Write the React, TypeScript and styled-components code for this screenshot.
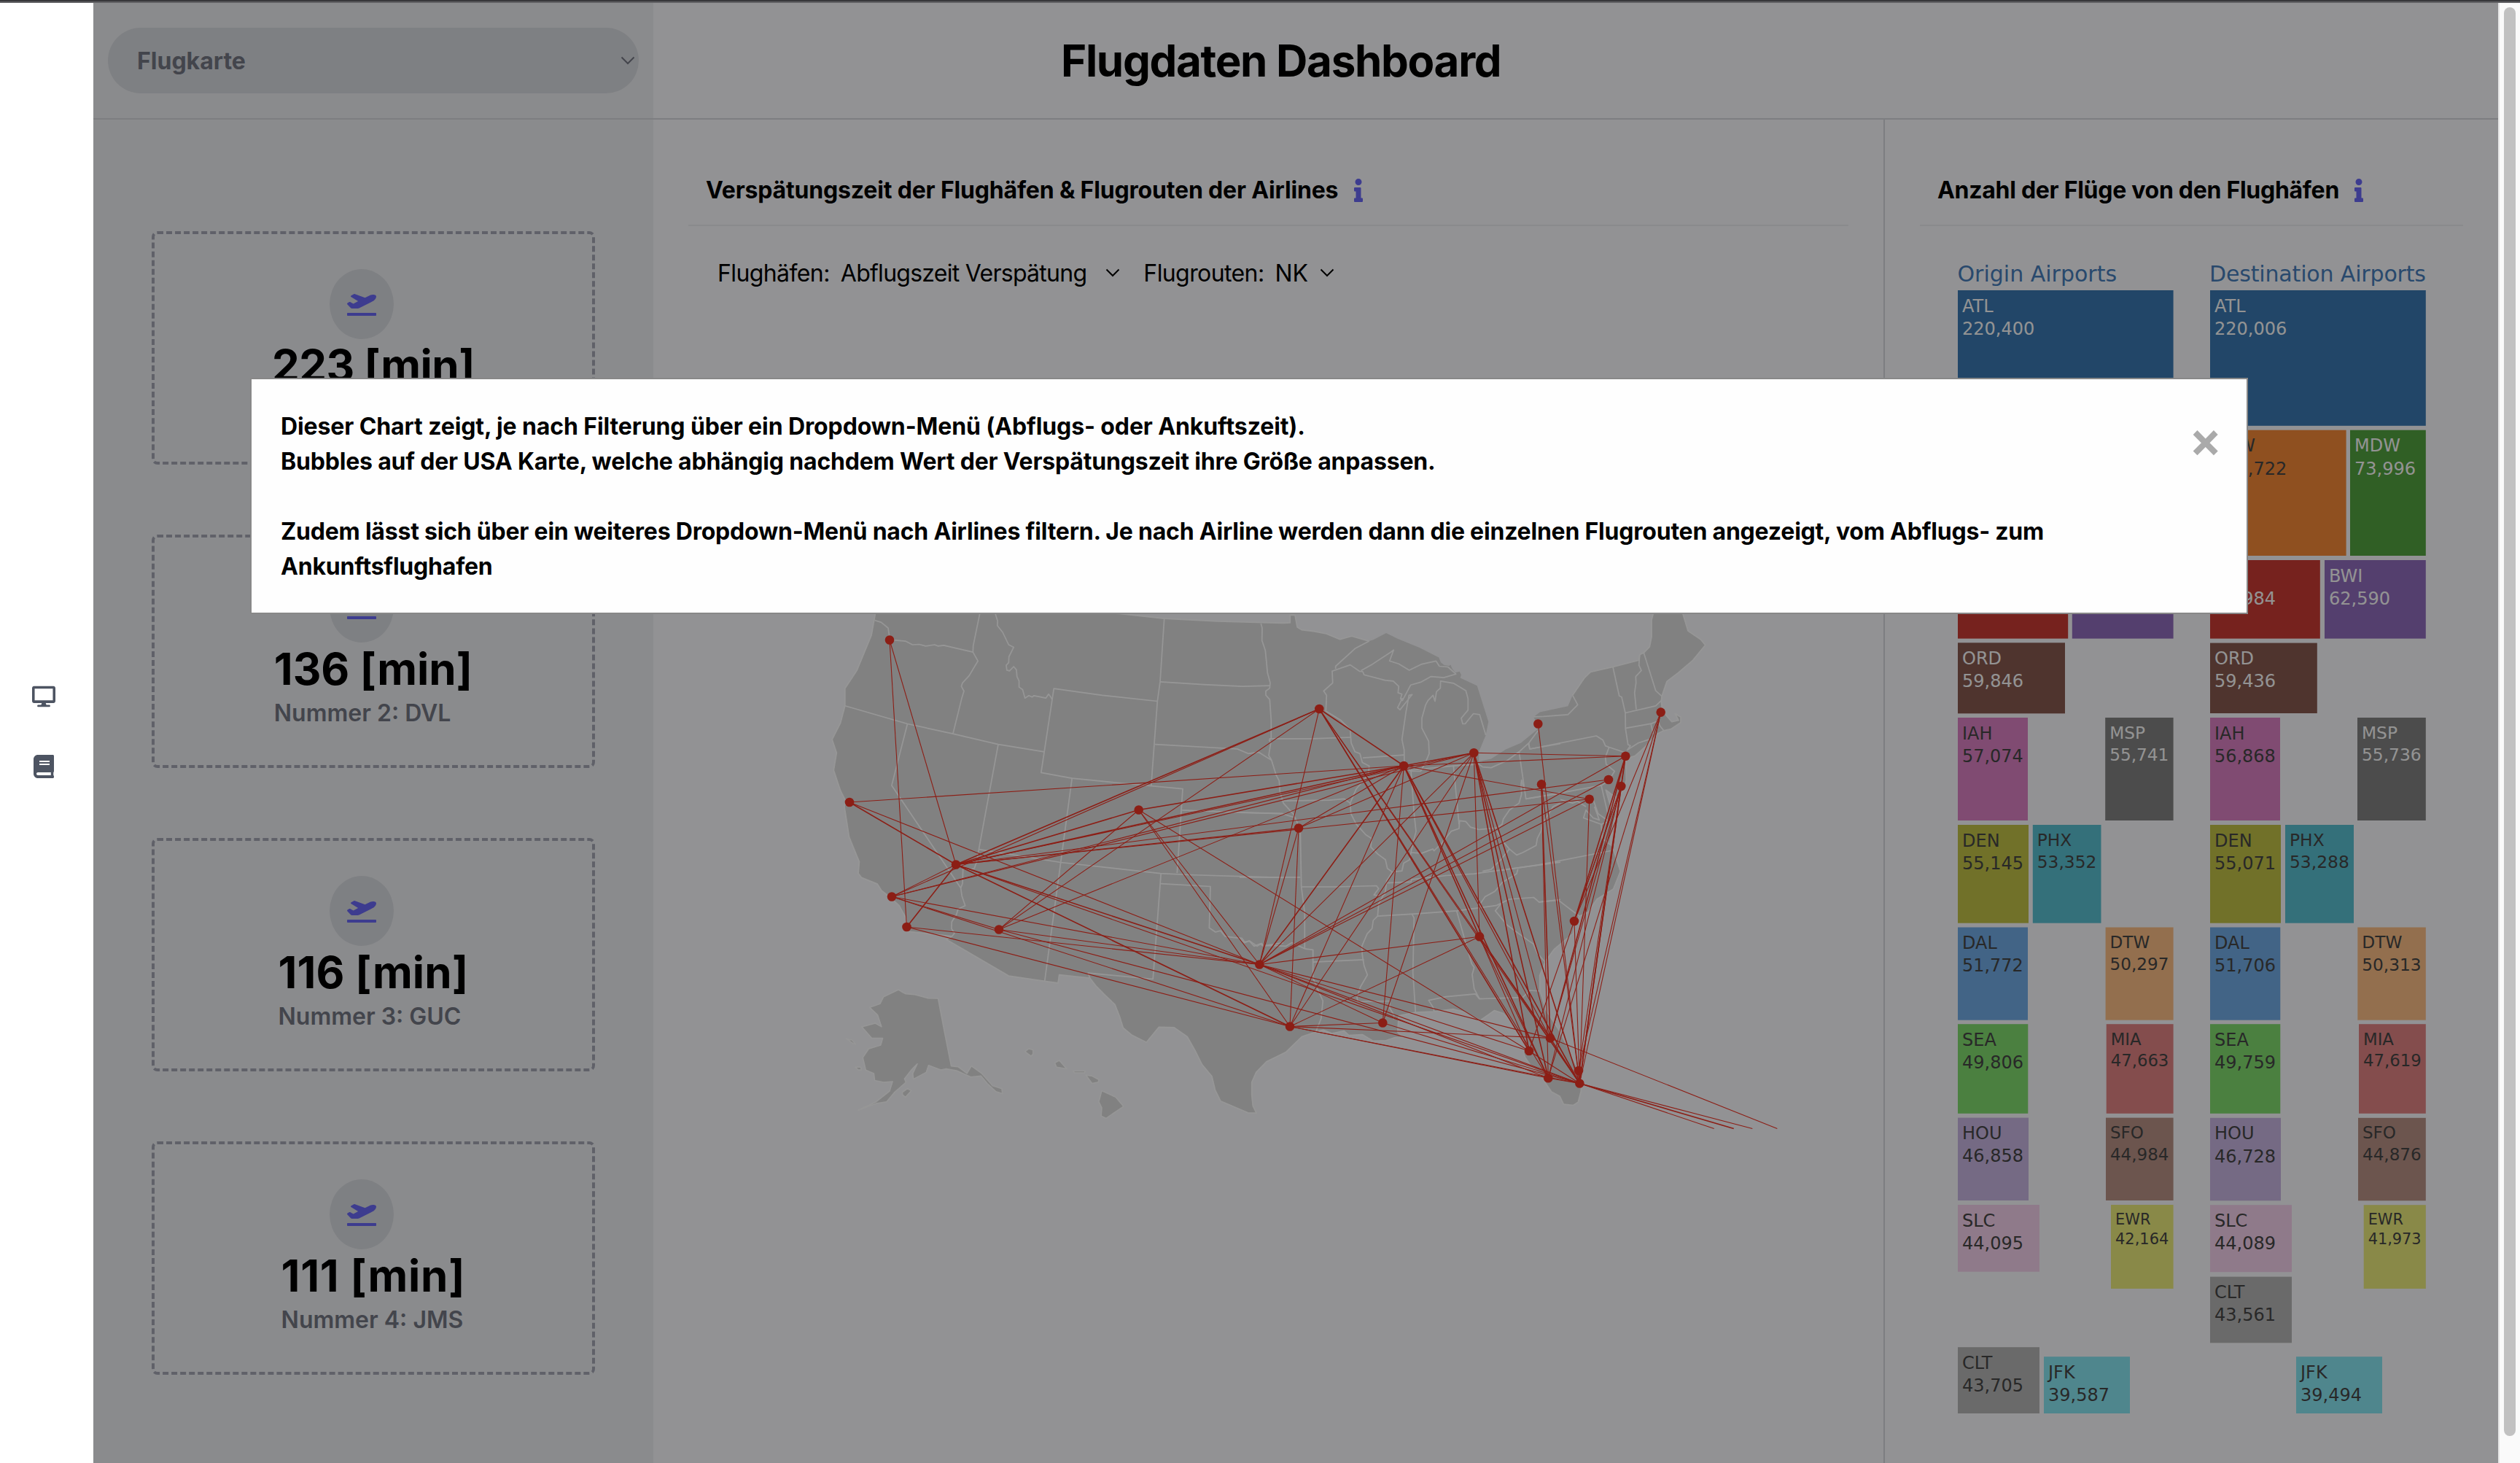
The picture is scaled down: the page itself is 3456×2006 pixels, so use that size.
import React from "react";
import styled, { createGlobalStyle } from "styled-components";
import { FaBook, FaDesktop, FaInfo, FaPlaneDeparture } from "react-icons/fa";

const GlobalStyle = createGlobalStyle`
  *, *::before, *::after { box-sizing: border-box; }
  html, body { margin: 0; padding: 0; background: #fff; }
  body { font-family: Inter, "Liberation Sans", sans-serif; color: #000; overflow: hidden; }
`;

/* ---------- page frame ---------- */

const Page = styled.div`
  display: flex;
  flex-direction: column;
  width: 3456px;
  height: 2006px;
  overflow: hidden;
`;

const WindowEdge = styled.div`
  flex: none;
  height: 4px;
  background: #37373a;
  border-bottom: 2px solid #616164;
`;

const Frame = styled.div`
  flex: 1;
  display: flex;
  min-height: 0;
`;

const Sidebar = styled.nav`
  flex: none;
  width: 128px;
  padding: 0 8px 4px 0;
  display: flex;
  flex-direction: column;
  align-items: center;
  justify-content: center;
  gap: 64px;
  background: #fff;
  color: #4d5462;

  svg {
    display: block;
    width: auto;
    height: 32px;
  }
`;

const Main = styled.main`
  position: relative;
  flex: 1;
  min-width: 0;
  display: flex;
  flex-direction: column;
  background: #f4f4f7;
`;

const ScrollTrack = styled.div`
  flex: none;
  width: 30px;
  padding: 6px 6px 37px;
  display: flex;
  background: #fafafa;
  border-left: 2px solid #e6e6e6;
`;

const ScrollThumb = styled.div`
  width: 16px;
  border-radius: 8px;
  background: #c1c1c1;
`;

/* ---------- header ---------- */

const Header = styled.header`
  flex: none;
  height: 160px;
  display: flex;
  align-items: stretch;
  border-bottom: 2px solid #d1d2d7;
`;

const HeaderSide = styled.div`
  width: 768px;
  padding: 0 20px;
  display: flex;
  align-items: center;
  background: #e6e8eb;
`;

const ViewSelect = styled.div`
  flex: 1;
  height: 90px;
  padding: 0 5px 0 40px;
  display: flex;
  align-items: center;
  justify-content: space-between;
  border-radius: 45px;
  background: #d3d5da;
  color: #71737f;
  font-size: 32px;
  font-weight: 700;
`;

const Title = styled.h1`
  margin: 0;
  padding-left: 559px;
  align-self: center;
  font-size: 60px;
  line-height: 72px;
  font-weight: 700;
  letter-spacing: -1.3px;
  white-space: nowrap;
`;

/* ---------- content columns ---------- */

const Content = styled.div`
  flex: 1;
  min-height: 0;
  display: flex;
`;

const StatsColumn = styled.aside`
  flex: none;
  width: 768px;
  padding: 153px 80px 0;
  display: flex;
  flex-direction: column;
  gap: 96px;
  background: #e6e8eb;
`;

const StatCard = styled.section`
  flex: none;
  height: 320px;
  padding-top: 48px;
  display: flex;
  justify-content: center;
  border: 4px dashed #a0a2b0;
  border-radius: 8px;
`;

const StatBody = styled.div`
  display: flex;
  flex-direction: column;
`;

const IconBadge = styled.div`
  align-self: center;
  width: 88px;
  height: 96px;
  margin-right: 32px;
  display: flex;
  align-items: center;
  justify-content: center;
  border-radius: 50%;
  background: #d3d5da;
  color: #6765ee;

  svg { width: 40px; height: 32px; }
`;

const StatValue = styled.div<{ $tracking: number }>`
  font-size: 60px;
  line-height: 73px;
  font-weight: 700;
  letter-spacing: ${(p) => p.$tracking}px;
  white-space: nowrap;
`;

const StatLabel = styled.div`
  font-size: 32px;
  line-height: 48px;
  font-weight: 600;
  color: #71737f;
  white-space: nowrap;
`;

const Panel = styled.section<{ $width?: number }>`
  flex: ${(p) => (p.$width ? "none" : 1)};
  width: ${(p) => (p.$width ? `${p.$width}px` : "auto")};
  padding: 48px 48px 0;
  min-width: 0;
  display: flex;
  flex-direction: column;

  & + & { border-left: 2px solid #d1d2d7; }
`;

const PanelHeading = styled.h2<{ $tracking: number; $gap: number }>`
  flex: none;
  margin: 0;
  height: 98px;
  padding: 1px 0 0 24px;
  display: flex;
  align-items: center;
  gap: ${(p) => p.$gap}px;
  border-bottom: 2px solid #e5e6ea;
  font-size: 32px;
  line-height: 48px;
  font-weight: 700;
  letter-spacing: ${(p) => p.$tracking}px;
  white-space: nowrap;

  svg { width: 12px; height: 32px; color: #6765ee; }
`;

const Filters = styled.div`
  flex: none;
  height: 48px;
  margin-top: 40px;
  padding-left: 40px;
  display: flex;
  align-items: center;
  gap: 32px;
  font-size: 32px;
  white-space: nowrap;
`;

const Filter = styled.label`
  display: flex;
  align-items: center;
  gap: 15px;
  letter-spacing: -0.6px;
`;

const FilterValue = styled.span<{ $gap: number; $tracking: number }>`
  display: flex;
  align-items: center;
  gap: ${(p) => p.$gap}px;
  letter-spacing: ${(p) => p.$tracking}px;
`;

const MapCanvas = styled.svg`
  flex: none;
  display: block;
  width: 1592px;
  height: 1200px;
`;

const TreemapCanvas = styled.svg`
  flex: none;
  display: block;
  width: 745px;
  height: 1690px;
  font-family: "DejaVu Sans", Verdana, sans-serif;
`;

/* ---------- modal ---------- */

const Overlay = styled.div`
  position: absolute;
  inset: 0;
  padding: 514px 0 0 215px;
  background: rgba(0, 0, 0, 0.4);
`;

const Modal = styled.div`
  width: 2740px;
  height: 324px;
  padding: 41px 34px 39px 40px;
  display: flex;
  justify-content: space-between;
  align-items: flex-start;
  border: 2px solid #888;
  background: #fefefe;
`;

const ModalText = styled.div`
  font-size: 32px;
  line-height: 48px;
  font-weight: 700;
  white-space: nowrap;
`;

const ModalLine = styled.p<{ $tracking: number; $spaced?: boolean }>`
  margin: 0 0 ${(p) => (p.$spaced ? 48 : 0)}px;
  letter-spacing: ${(p) => p.$tracking}px;
`;

const CloseButton = styled.button`
  margin: 0;
  padding: 0;
  border: 0;
  background: none;
  color: #aaa;
  -webkit-text-stroke: 2px #aaa;
  font-family: "DejaVu Sans", sans-serif;
  font-size: 53px;
  line-height: 90px;
  font-weight: 700;
`;

/* ---------- small drawings ---------- */

const Chevron = () => (
  <svg width="20" height="12" viewBox="0 0 20 12" fill="none" stroke="currentColor" strokeWidth="2">
    <path d="M1.5 1.5 10 10 18.5 1.5" />
  </svg>
);

/* ---------- statistics ---------- */

const stats = [
  { value: "223 [min]", tracking: -0.57 },
  { value: "136 [min]", tracking: 0, label: "Nummer 2: DVL" },
  { value: "116 [min]", tracking: 0.15, label: "Nummer 3: GUC" },
  { value: "111 [min]", tracking: 0.7, label: "Nummer 4: JMS" },
];

/* ---------- map ---------- */

type Pt = [number, number];

/* The map is digitised in three tiles, each with its own origin and scale. */
const tile = (ox: number, sx: number) => (s: string): Pt[] =>
  s
    .trim()
    .split(/\s+/)
    .map((pair) => {
      const [x, y] = pair.split(",").map(Number);
      return [ox + x / sx, 820 + y / 2.0632] as Pt;
    });
const west = tile(1120, 2.45);
const mid = tile(1700, 3);
const east = tile(2060, 3);

const toPath = (pts: Pt[], close = false) =>
  "M" + pts.map(([x, y]) => `${x.toFixed(1)} ${y.toFixed(1)}`).join("L") + (close ? "Z" : "");

const northWest = [
  ...west("197,20 1018,44 1168,58 1350,66 1568,71"),
  ...mid("208,70 208,48 228,48 237,82 255,90 305,94 357,101 413,117 461,108 533,122"),
];
const lakes = [
  ...mid(
    "550,118 603,99 650,115 740,140 820,168 828,182 842,190 862,192 868,189 875,200 888,211 905,208 912,217 908,226 977,248 1024,350 1013,388 985,434 985,462 1035,455 1095,428 1157,410 1225,372"
  ),
  ...east("148,365 130,336 155,323 271,306 290,275"),
];
const atlantic = east(
  "290,275 340,225 364,209 456,195 563,176 566,160 583,155 607,138 615,110 615,62 622,44 622,20 742,20 742,40 765,93 817,117 836,133 785,176 725,211 678,236 657,278 655,292 658,310 675,332 698,350 726,346 712,327 735,337 735,352 697,370 665,375 640,384 590,420 548,446 522,452 509,460 511,515 498,545 476,565 450,555 427,543 440,575 452,600 470,607 458,640 444,690 458,712 487,773 458,823 390,852 355,888 318,900 297,928 291,950 215,993 178,1028 155,1068 155,1110 180,1165 238,1226 290,1300 320,1345 327,1370 325,1395 313,1426 293,1435 253,1432 237,1409 203,1397 155,1348 115,1320 95,1300"
);
const gulf = [
  ...mid(
    "1175,1300 1168,1286 1180,1262 1145,1235 1120,1200 1085,1175 1048,1167 990,1195 930,1172 880,1163 800,1170 724,1172 655,1182 650,1228 672,1243 640,1243 602,1252 548,1253 505,1235 450,1237 430,1225 380,1232 345,1222 315,1227 256,1241 190,1285 112,1311 68,1342 50,1370 50,1405 55,1437 69,1457 35,1457"
  ),
  ...west(
    "1452,1457 1357,1423 1339,1392 1328,1353 1295,1320 1270,1278 1245,1241 1201,1215 1150,1214 1108,1257 1060,1237 1030,1216 1018,1184 1002,1150 970,1124 940,1099 918,1075 815,1066 811,1089 766,1084 645,1069 436,966 455,957 305,943 300,905 277,870 240,842 218,828 204,809 151,791 140,779 143,746 109,676 93,590 98,575 80,545 57,487 67,438 52,400 80,353 95,305 95,256 135,205 184,105 197,44 197,20"
  ),
];
const mainland = [...northWest, ...lakes, ...atlantic, ...gulf];

const islands = [
  west(
    "275,1108 290,1116 300,1120 330,1122 375,1132 408,1133 430,1230 452,1324 475,1326 505,1345 520,1324 555,1345 592,1380 622,1388 624,1402 602,1396 575,1375 552,1352 518,1355 470,1337 435,1332 418,1335 376,1322 368,1342 325,1361 323,1345 338,1318 318,1335 295,1360 300,1370 262,1398 235,1425 200,1430 140,1449 200,1425 245,1395 255,1368 225,1370 195,1365 192,1345 165,1335 155,1300 175,1275 215,1265 222,1245 185,1245 152,1213 197,1203 218,1213 205,1180 178,1158 213,1148 225,1128 258,1115"
  ),
  west("288,1398 305,1388 318,1394 298,1412 288,1405"),
  west("130,1327 148,1327 150,1335 140,1335"),
  west("100,1247 118,1250 131,1262 122,1260"),
  west("700,1283 713,1275 727,1278 727,1290 720,1296"),
  west("800,1315 815,1308 840,1332 806,1327"),
  west("862,1338 902,1338 900,1343 866,1343"),
  west("905,1350 925,1352 949,1363 945,1370 925,1373"),
  west("958,1394 1005,1412 1031,1438 972,1472 956,1465 958,1442 948,1425"),
];

const borders = [
  west("195,63 217,69 240,85 246,118 298,122 322,132 345,131 366,136 396,132 408,136 427,134 525,153"),
  west("548,44 526,135 525,153 542,178 512,220 490,240 486,250 495,263 487,285 458,384"),
  west("95,305 305,356 458,384 610,414 765,435"),
  west(
    "600,44 608,65 607,78 625,97 645,132 662,139 646,166 645,183 637,190 639,204 648,206 662,194 671,203 673,222 680,235 680,252 692,259 700,283 713,276 724,280 730,276 770,283 779,272 786,279 791,287"
  ),
  west("1145,292 960,275 797,256 754,494 858,510 1003,522 1230,540 1211,778"),
  west("1168,58 1154,237 1145,292 1124,530"),
  west("1154,237 1300,245 1430,250 1523,248"),
  west("1137,414 1414,427 1450,440 1485,436 1515,452 1527,458"),
  west("858,510 820,748 766,1084"),
  west("1228,600 1400,606 1568,610"),
  west("305,356 252,530 484,820 490,808 492,758 510,770 530,765 538,745 545,711 610,414"),
  west("545,711 820,748 1155,779 1250,783 1568,791"),
  west("484,820 488,843 499,870 475,880 470,895 454,916 453,935 463,948 455,957"),
  west("1157,779 1130,1078 912,1061 918,1075"),
  west(
    "1155,808 1323,816 1319,933 1340,945 1357,941 1372,957 1400,960 1428,962 1438,973 1455,970 1480,985 1495,977 1502,984 1568,975"
  ),
  mid(
    "88,72 93,85 92,120 106,148 115,212 126,240 124,255 108,263 108,275 124,287 130,345 130,397 122,402 128,410 120,445 131,458 150,500 163,517 166,548 180,580 222,612 240,640 250,660 254,817 268,890 268,992"
  ),
  mid("122,398 300,398 459,394"),
  mid(
    "357,290 355,320 415,345 455,372 459,410 475,435 495,440 505,465 533,475 530,500 480,540 455,580 458,610 480,640 520,670 543,680 540,705 570,725 600,740 608,765 628,775 605,800 600,830 572,865 568,900 550,912 545,935 525,950 503,985 505,1010 512,1040 526,1066 497,1100 483,1130 487,1142 618,1140 618,1160 635,1180 633,1192"
  ),
  mid("357,290 358,275 346,263 383,240 381,207 455,189 493,207 507,208"),
  mid("395,200 395,193 475,143 533,122"),
  mid(
    "507,208 512,217 600,233 632,235 655,250 652,268 668,272 662,285 670,290 704,246 745,238 788,222 840,225 890,215 857,195 822,193 808,178 750,187 698,204 655,186 617,178 634,147 622,153 540,190 500,205"
  ),
  mid(
    "670,283 650,310 660,316 710,273 697,275 684,325 668,400 677,430 678,475 705,490 745,490 765,465 780,440 778,405 750,368 750,340 765,303 775,290 796,275 804,292 810,265 826,255 827,235 880,241 931,262 940,285 940,317 912,340 918,356 928,356 962,327 988,330 1013,388"
  ),
  mid("507,452 678,444"),
  mid("705,487 718,610 726,660 715,690 705,720"),
  mid(
    "628,775 668,772 675,750 700,740 705,720 750,722 795,710 800,715 830,695 870,660 903,652 905,630 930,632 950,648 985,655 1060,650 1080,640 1085,625 1110,600 1150,580 1160,555 1158,525 1160,515 1168,535"
  ),
  mid("705,487 880,475 903,640"),
  mid("880,475 985,470 1000,478 1035,480 1100,460 1150,435 1190,410 1228,375"),
  mid("1150,435 1178,568 1320,553"),
  mid("1190,410 1193,427 1320,412"),
  mid("175,574 370,572 430,568 455,580"),
  mid("0,607 175,610 222,620"),
  mid("0,790 250,790"),
  mid("254,817 400,817 563,814 572,822 553,840 572,842 600,838"),
  mid("605,806 705,803 708,796 850,785 965,780 1040,773 1320,747"),
  mid("568,900 730,893 893,885 1000,875 985,870 1010,845 1050,830 1080,805 1140,780 1145,767"),
  mid("710,895 718,905 713,1060 724,1172"),
  mid("893,885 930,975 955,1035 965,1045 957,1065 965,1105 987,1134"),
  mid("800,1170 798,1160 778,1138 850,1128 970,1120 987,1134 1165,1130 1195,1110 1240,1112"),
  mid("1000,875 1055,870 1110,852 1210,847 1232,860 1320,853"),
  mid("1075,865 1052,885 1100,925 1190,970 1208,978 1225,1005 1255,1028"),
  mid("302,1030 512,1023"),
  mid("268,992 302,995 302,1075 320,1105 343,1140 335,1190 315,1225"),
  mid("0,962 20,975 40,970 60,985 85,978 95,984 130,983 190,985 215,975 268,992"),
  mid("1000,773 1035,768 1075,740 1110,710 1140,727 1165,720 1220,700 1225,680 1240,660 1245,640 1290,590 1320,580"),
  mid("1110,710 1085,690 1060,660"),
  east("456,195 470,240 482,277 492,280 507,325 508,370 518,415 528,418 515,430 560,410 605,400"),
  east("566,160 563,190 573,205 550,222 551,240 545,268 552,315"),
  east("583,155 632,262 657,278"),
  east("507,325 632,305 655,290"),
  east("510,368 615,355 640,348 650,362 665,375"),
  east("612,355 622,385"),
  east("108,412 115,427 388,390 415,402 425,418 440,422 505,437"),
  east("440,422 425,450 428,470 463,490 440,515 410,530"),
  east("98,568 250,550 408,530 435,610"),
  east("130,336 170,335 271,330 311,302 290,275"),
  east("0,770 150,755 447,715"),
  east("150,860 232,855 318,900"),
  east("375,570 395,610 440,632 408,640 335,622 345,600 375,622 400,628 380,590"),
  east("408,640 412,680 450,700"),
  east("240,570 290,580 310,575 345,590"),
];

const airports: Record<string, Pt> = {
  PDX: [1220, 877.5], OAK: [1165, 1100], LAS: [1311, 1185.5], LAX: [1223, 1229.5],
  SAN: [1243.5, 1271], PHX: [1370, 1274.5], DEN: [1561.7, 1110.5], DFW: [1727.3, 1322.5],
  MSP: [1809.3, 972], MCI: [1781, 1135.5], ORD: [1925.3, 1050], DTW: [2021.3, 1032.3],
  IAH: [1769, 1407.5], MSY: [1896.3, 1402.5], ATL: [2029, 1284.3], IAG: [2109.3, 992.5],
  LBE: [2114, 1075.4], MYR: [2159, 1263], MCO: [2126, 1423.4], TPA: [2097, 1441],
  RSW: [2123.3, 1478.2], FLL: [2166.3, 1485.5], PBI: [2165, 1468], BOS: [2277.7, 976.6],
  LGA: [2229.3, 1036.7], PHL: [2206, 1069], ACY: [2223.3, 1078], BWI: [2179.7, 1095.8],
};

/* Destinations outside the drawn area: the line leaves over the lower edge. */
const offMap: Record<string, Pt> = {
  SJU: [2437.3, 1547.5], STT: [2403.3, 1547.5], AUA: [2377.7, 1547.5], BQN: [2350.7, 1547.5],
};

const routes = `
  PDX-SAN PDX-LAS OAK-ORD OAK-LAS OAK-DFW LAX-LAS SAN-LAS LAX-ORD LAX-DTW LAX-DFW LAX-IAH LAX-PHX
  SAN-DFW SAN-IAH PHX-MSP PHX-ORD PHX-DEN PHX-DFW PHX-FLL
  LAS-DEN LAS-MSP LAX-MSP LAS-ORD LAS-DTW LAS-MCI LAS-PHL LAS-BWI LAS-DFW LAS-IAH LAS-FLL
  DEN-ORD DEN-DFW DEN-IAH DEN-TPA
  DFW-MSP DFW-MCI DFW-ORD DFW-DTW DFW-LGA DFW-PHL DFW-BWI DFW-ATL DFW-MSY DFW-MCO DFW-TPA DFW-RSW DFW-FLL
  IAH-MCI IAH-ORD IAH-DTW IAH-MSY IAH-ATL IAH-MCO IAH-RSW IAH-FLL
  MSP-ORD MSP-TPA MSP-RSW MSP-MCO MSP-FLL
  ORD-MSY ORD-ATL ORD-MCO ORD-RSW ORD-FLL ORD-BWI ORD-LGA ORD-DTW ORD-MCI
  DTW-MSY DTW-ATL DTW-TPA DTW-RSW DTW-MCO DTW-FLL DTW-LGA DTW-MCI
  ATL-MCO ATL-TPA ATL-RSW ATL-FLL MSY-FLL
  IAG-FLL LBE-FLL LBE-MCO LBE-RSW
  MYR-BOS MYR-LGA MYR-ACY MYR-FLL TPA-ACY
  MCO-LGA MCO-ACY RSW-ACY RSW-BOS
  FLL-BOS PBI-BOS FLL-LGA FLL-ACY PBI-LGA FLL-BWI
  MCO-FLL RSW-FLL TPA-FLL
  MCO-SJU FLL-STT FLL-AUA FLL-BQN
`
  .trim()
  .split(/\s+/)
  .map((r) => r.split("-"));

/* Busy connections are flown by several legs and read as a heavier line. */
const busy = new Set(
  "OAK-LAS SAN-LAS LAS-DEN LAS-MSP LAS-ORD LAS-DFW LAS-IAH DEN-ORD DFW-ORD MSP-ORD MSP-TPA ORD-ATL ORD-RSW ORD-FLL ORD-DTW DTW-FLL DTW-TPA DTW-RSW MYR-LGA FLL-LGA FLL-ACY MCO-LGA FLL-AUA MCO-FLL LBE-MCO".split(" ")
);

const at = (code: string) => airports[code] ?? offMap[code];

const RouteMap = () => (
  <MapCanvas viewBox="944 398 1592 1200">
    <path d={toPath(mainland, true)} fill="#d8d8d8" />
    <g fill="none" stroke="#fbfbfb" strokeWidth="1.7" strokeLinejoin="round">
      <path d={toPath(northWest)} />
      <path d={toPath([...atlantic, ...gulf])} />
      {borders.map((b, i) => (
        <path key={i} d={toPath(b)} />
      ))}
    </g>
    <g fill="#d8d8d8" stroke="#fbfbfb" strokeWidth="1.5" strokeLinejoin="round">
      {islands.map((b, i) => (
        <path key={i} d={toPath(b, true)} />
      ))}
    </g>
    <g stroke="#e93224">
      {routes.map(([a, b]) => {
        const [x1, y1] = at(a);
        const [x2, y2] = at(b);
        return <line key={a + b} x1={x1} y1={y1} x2={x2} y2={y2} strokeWidth={busy.has(`${a}-${b}`) ? 1.6 : 1.1} />;
      })}
    </g>
    <g fill="#e93224">
      {Object.entries(airports).map(([code, [x, y]]) => (
        <circle key={code} cx={x} cy={y} r={6.3} />
      ))}
    </g>
  </MapCanvas>
);

/* ---------- treemap ---------- */

type Cell = [code: string, value: string, x: number, y: number, right: number, bottom: number];

const cellColors: Record<string, [fill: string, text: string]> = {
  ATL: ["#3a76ae", "light"], DFW: ["#ef8536", "dark"], MDW: ["#519e3e", "light"],
  LAX: ["#c53a32", "light"], BWI: ["#8d6ab8", "light"], ORD: ["#84584e", "light"],
  IAH: ["#d57ebe", "dark"], MSP: ["#7f7f7f", "light"], DEN: ["#bcbd45", "dark"],
  PHX: ["#58bbcc", "dark"], DAL: ["#6ea7df", "dark"], DTW: ["#f5b982", "dark"],
  SEA: ["#7dd56c", "dark"], MIA: ["#dc8080", "dark"], HOU: ["#c3b1dd", "dark"],
  SFO: ["#b48e82", "dark"], SLC: ["#eecbe6", "dark"], EWR: ["#e4e478", "dark"],
  CLT: ["#b1b1b1", "dark"], JFK: ["#84dfeb", "dark"],
};

const originCells: Cell[] = [
  ["ATL", "220,400", 2685, 398, 2980.6, 583.8],
  ["LAX", "", 2685, 768, 2836.2, 875.6],
  ["BWI", "", 2841.8, 768, 2980.6, 875.6],
  ["ORD", "59,846", 2685, 881.3, 2832, 978.3],
  ["IAH", "57,074", 2685, 984, 2781, 1125],
  ["MSP", "55,741", 2887.2, 984, 2980.6, 1125],
  ["DEN", "55,145", 2685, 1131, 2782, 1265.7],
  ["PHX", "53,352", 2787.8, 1131, 2881.5, 1265.7],
  ["DAL", "51,772", 2685, 1271.5, 2781, 1398.7],
  ["DTW", "50,297", 2887.6, 1271.5, 2980.6, 1398.7],
  ["SEA", "49,806", 2685, 1404.2, 2781.3, 1526.8],
  ["MIA", "47,663", 2888.7, 1404.2, 2980.6, 1526.8],
  ["HOU", "46,858", 2685, 1532.6, 2782, 1646],
  ["SFO", "44,984", 2888, 1532.6, 2980.6, 1646],
  ["SLC", "44,095", 2685, 1652, 2797, 1743.7],
  ["EWR", "42,164", 2895, 1652, 2980.6, 1767],
  ["CLT", "43,705", 2685, 1847.2, 2797, 1938],
  ["JFK", "39,587", 2803, 1860.2, 2921, 1938],
];

const destinationCells: Cell[] = [
  ["ATL", "220,006", 3031, 398, 3326.8, 583.8],
  ["DFW", "174,722", 3031, 589.7, 3217.6, 762],
  ["MDW", "73,996", 3223, 589.7, 3326.8, 762],
  ["LAX", "64,984", 3031, 768, 3181.8, 875.6],
  ["BWI", "62,590", 3188, 768, 3326.8, 875.6],
  ["ORD", "59,436", 3031, 881.6, 3177.8, 978],
  ["IAH", "56,868", 3031, 984, 3127, 1125],
  ["MSP", "55,736", 3233, 984, 3326.8, 1125],
  ["DEN", "55,071", 3031, 1131, 3128, 1265.7],
  ["PHX", "53,288", 3134, 1131, 3228, 1265.7],
  ["DAL", "51,706", 3031, 1271.5, 3127.3, 1398.7],
  ["DTW", "50,313", 3233.3, 1271.5, 3326.8, 1398.7],
  ["SEA", "49,759", 3031, 1404.2, 3127.3, 1526.8],
  ["MIA", "47,619", 3235, 1404.2, 3326.8, 1526.8],
  ["HOU", "46,728", 3031, 1532.8, 3128, 1646.3],
  ["SFO", "44,876", 3234, 1532.8, 3326.8, 1646.3],
  ["SLC", "44,089", 3031, 1652.2, 3143, 1744.2],
  ["EWR", "41,973", 3241.7, 1652.2, 3326.8, 1767],
  ["CLT", "43,561", 3031, 1750.6, 3143, 1841.3],
  ["JFK", "39,494", 3149, 1860.2, 3267, 1938],
];

const TreemapCell = ({ cell: [code, value, x, y, right, bottom] }: { cell: Cell }) => {
  const [fill, tone] = cellColors[code];
  const width = right - x;
  /* The label shrinks until the figure fits between the cell's paddings. */
  const size = Math.min(24, (width - 12.2) / (value.length === 6 ? 3.498 : 4.134));
  return (
    <g>
      <rect x={x} y={y} width={width} height={bottom - y} fill={fill} />
      {value && (
        <text fill={tone === "light" ? "#f6f6f6" : "#444"} fontSize={size}>
          <tspan x={x + 6} y={y + 5.6 + size}>{code}</tspan>
          <tspan x={x + 6} y={y + 5.6 + size * 2.3}>{value}</tspan>
        </text>
      )}
    </g>
  );
};

const Treemap = () => (
  <TreemapCanvas viewBox="2633 310 745 1690">
    <g fill="#457bb6" fontSize="30">
      <text x="2684.5" y="386">Origin Airports</text>
      <text x="3030" y="386" textLength="297">Destination Airports</text>
    </g>
    {originCells.map((c) => <TreemapCell key={c[0]} cell={c} />)}
    {destinationCells.map((c) => <TreemapCell key={c[0]} cell={c} />)}
  </TreemapCanvas>
);

/* ---------- app ---------- */

export default function App() {
  return (
    <Page>
      <GlobalStyle />
      <WindowEdge />
      <Frame>
        <Sidebar>
          <FaDesktop />
          <FaBook />
        </Sidebar>
        <Main>
          <Header>
            <HeaderSide>
              <ViewSelect>
                Flugkarte
                <Chevron />
              </ViewSelect>
            </HeaderSide>
            <Title>Flugdaten Dashboard</Title>
          </Header>
          <Content>
            <StatsColumn>
              {stats.map((s) => (
                <StatCard key={s.value}>
                  <StatBody>
                    <IconBadge>
                      <FaPlaneDeparture />
                    </IconBadge>
                    <StatValue $tracking={s.tracking}>{s.value}</StatValue>
                    {s.label && <StatLabel>{s.label}</StatLabel>}
                  </StatBody>
                </StatCard>
              ))}
            </StatsColumn>
            <Panel>
              <PanelHeading $tracking={-0.17} $gap={22}>
                Verspätungszeit der Flughäfen &amp; Flugrouten der Airlines
                <FaInfo />
              </PanelHeading>
              <Filters>
                <Filter>
                  Flughäfen:
                  <FilterValue $gap={26} $tracking={-0.73}>
                    Abflugszeit Verspätung
                    <Chevron />
                  </FilterValue>
                </Filter>
                <Filter>
                  Flugrouten:
                  <FilterValue $gap={16} $tracking={-0.1}>
                    NK
                    <Chevron />
                  </FilterValue>
                </Filter>
              </Filters>
              <RouteMap />
            </Panel>
            <Panel $width={843}>
              <PanelHeading $tracking={-0.28} $gap={21}>
                Anzahl der Flüge von den Flughäfen
                <FaInfo />
              </PanelHeading>
              <Treemap />
            </Panel>
          </Content>
          <Overlay>
            <Modal>
              <ModalText>
                <ModalLine $tracking={-0.11}>
                  Dieser Chart zeigt, je nach Filterung über ein Dropdown-Menü (Abflugs- oder Ankuftszeit).
                </ModalLine>
                <ModalLine $tracking={-0.19} $spaced>
                  Bubbles auf der USA Karte, welche abhängig nachdem Wert der Verspätungszeit ihre Größe anpassen.
                </ModalLine>
                <ModalLine $tracking={-0.215}>
                  Zudem lässt sich über ein weiteres Dropdown-Menü nach Airlines filtern. Je nach Airline werden dann
                  die einzelnen Flugrouten angezeigt, vom Abflugs- zum
                  <br />
                  Ankunftsflughafen
                </ModalLine>
              </ModalText>
              <CloseButton>×</CloseButton>
            </Modal>
          </Overlay>
        </Main>
        <ScrollTrack>
          <ScrollThumb />
        </ScrollTrack>
      </Frame>
    </Page>
  );
}
